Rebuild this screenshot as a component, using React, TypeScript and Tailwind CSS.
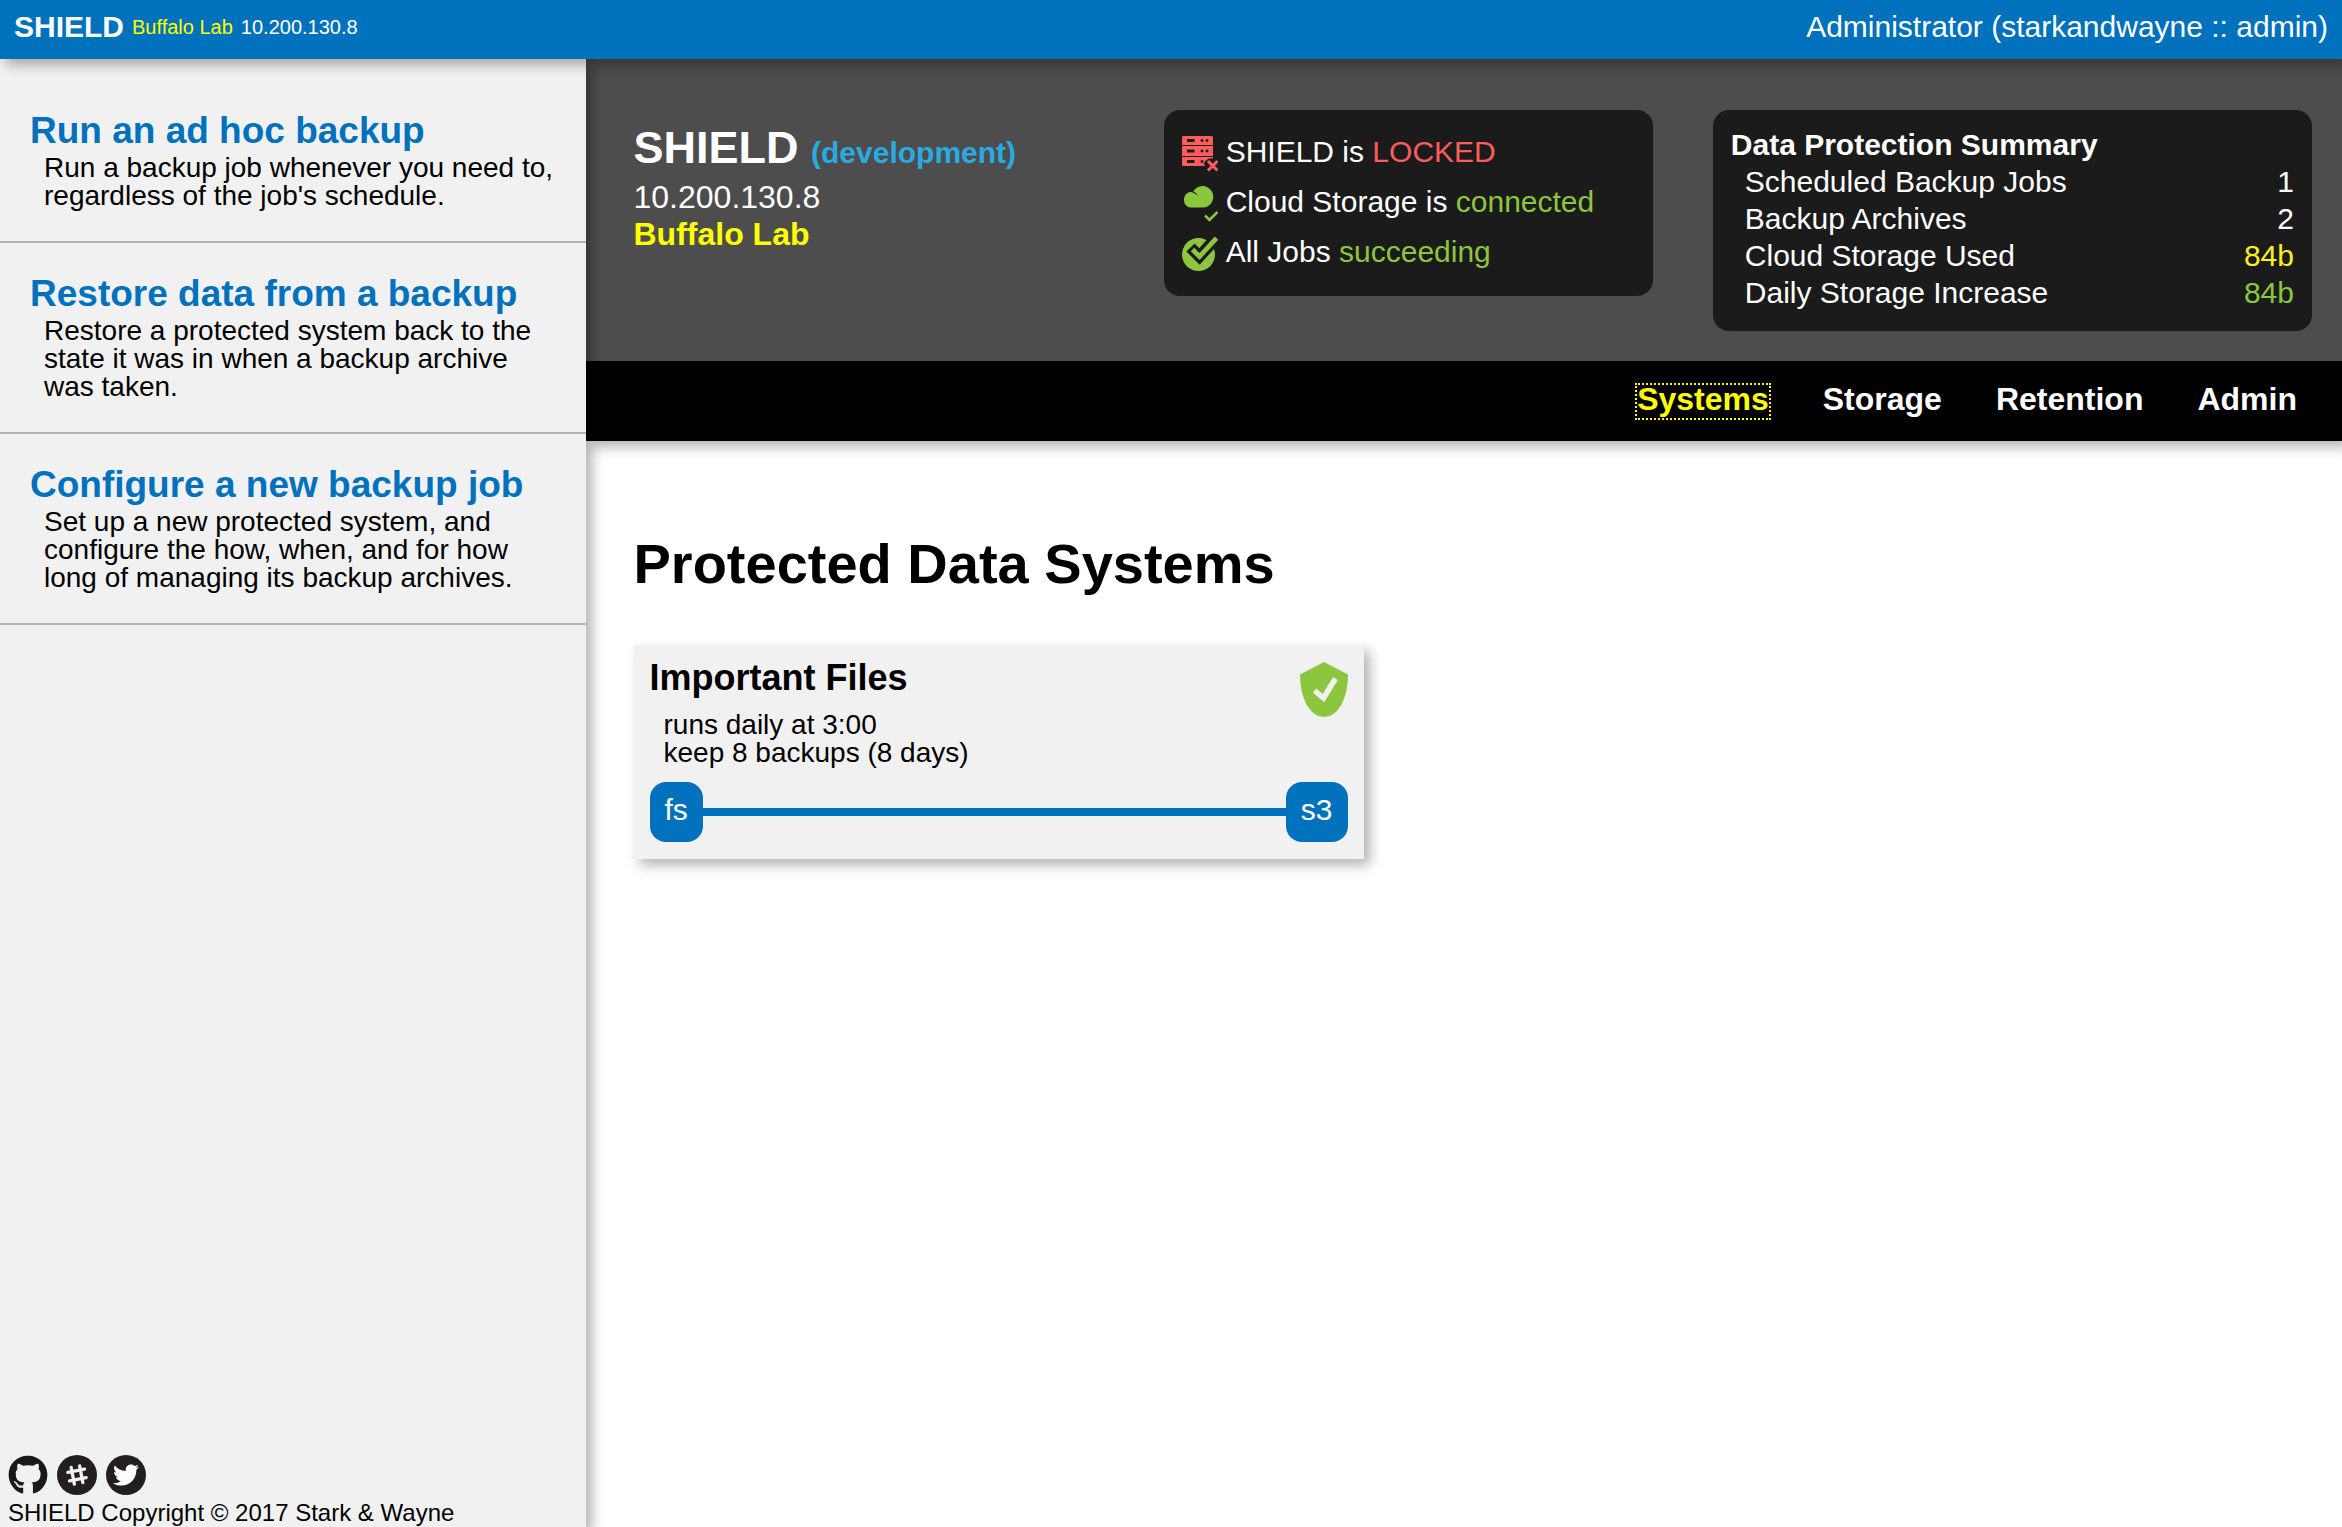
import React from "react";
import { FaGithub, FaTwitter } from "react-icons/fa";

const tasks = [
  {
    title: "Run an ad hoc backup",
    text: "Run a backup job whenever you need to, regardless of the job's schedule.",
  },
  {
    title: "Restore data from a backup",
    text: "Restore a protected system back to the state it was in when a backup archive was taken.",
  },
  {
    title: "Configure a new backup job",
    text: "Set up a new protected system, and configure the how, when, and for how long of managing its backup archives.",
  },
];

const summary = [
  { label: "Scheduled Backup Jobs", value: "1", color: "text-white" },
  { label: "Backup Archives", value: "2", color: "text-white" },
  { label: "Cloud Storage Used", value: "84b", color: "text-[#fcee21]" },
  { label: "Daily Storage Increase", value: "84b", color: "text-[#8cc63f]" },
];

const tabs = ["Systems", "Storage", "Retention", "Admin"];

function ServerLockedIcon() {
  return (
    <svg viewBox="0 0 36 36" className="size-9 shrink-0" fill="#ff5c5c" aria-hidden="true">
      <path
        fillRule="evenodd"
        d="M1.500 0H29.500a1.500 1.500 0 0 1 1.500 1.500V9H0V1.500A1.500 1.500 0 0 1 1.500 0ZM5 3V6H12.500V3ZM20 3a1.500 1.500 0 1 0 .01 0ZM25 3a1.500 1.500 0 1 0 .01 0Z"
      />
      <path
        fillRule="evenodd"
        d="M0 10H31V20H0ZM5 13.500V16.500H12.500V13.500ZM20 13.500a1.500 1.500 0 1 0 .01 0ZM25 13.500a1.500 1.500 0 1 0 .01 0Z"
      />
      <path
        fillRule="evenodd"
        d="M0 21H31V22.500Q27 21.500 24 24.500Q20.500 27 23 30H1.500A1.500 1.500 0 0 1 0 28.500ZM5 24V27H12.500V24ZM20 24a1.500 1.500 0 1 0 .01 0Z"
      />
      <path d="M26 25L35.500 34.500M35.500 25L26 34.500" stroke="#ff5c5c" strokeWidth="3" />
    </svg>
  );
}

function CloudConnectedIcon() {
  return (
    <svg viewBox="0 0 36 36" className="size-9 shrink-0" fill="#8cc63f" aria-hidden="true">
      <path d="M8 6A8 8 0 0 0 8 21.500H21A10.700 10.700 0 1 0 11.300 5.500Q14.500 6.500 15.700 9.800Q12 6 8 6Z" />
      <path d="M23 29.500L27.500 34L35.500 26" fill="none" stroke="#8cc63f" strokeWidth="2.500" />
    </svg>
  );
}

function JobsOkIcon() {
  return (
    <svg viewBox="0 0 36 36" className="size-9 shrink-0" aria-hidden="true">
      <circle cx="16.500" cy="18.500" r="16.500" fill="#8cc63f" />
      <path d="M8.500 11.500L17.500 20.500L36 0" fill="none" stroke="#1b1b1b" strokeWidth="11.500" />
      <path d="M10.500 13.500L17.500 20.500L34.500 2" fill="none" stroke="#8cc63f" strokeWidth="4.800" />
    </svg>
  );
}

function ShieldOkIcon() {
  return (
    <svg viewBox="0 0 48 55" className="h-[55px] w-12 shrink-0" role="img" aria-label="Protected">
      <path d="M24 0L48 12.500Q48 30 41.500 42.500Q34.500 55 24 55Q13.500 55 6.500 42.500Q0 30 0 12.500Z" fill="#8cc63f" />
      <path d="M14.500 28.500L23.500 36L35.500 16.500" fill="none" stroke="#f1f1f1" strokeWidth="5.500" />
    </svg>
  );
}

function SlackIcon() {
  return (
    <svg viewBox="0 0 40 40" className="size-10" aria-hidden="true">
      <circle cx="20" cy="20" r="20" fill="#231f20" />
      <g transform="rotate(-11 20 20)" fill="none" stroke="#f1f1f1" strokeWidth="3.300" strokeLinecap="round">
        <path d="M15.700 11.500V28.500M24.300 11.500V28.500M11.500 15.700H28.500M11.500 24.300H28.500" />
      </g>
    </svg>
  );
}

export default function App() {
  return (
    <div className="flex min-h-screen flex-col overflow-x-hidden bg-white font-['Liberation_Sans',Arial,sans-serif] text-black">
      <header className="relative z-20 flex items-center justify-between bg-[#0071bd] pt-[9px] pr-[14px] pb-[14px] pl-[14px] text-[30px] leading-9 text-white shadow-[6px_6px_12px_rgba(0,0,0,0.3)]">
        <div className="flex items-center gap-2">
          <span className="font-bold">SHIELD</span>
          <span className="text-xl text-[#ff0]">Buffalo Lab</span>
          <span className="text-xl">10.200.130.8</span>
        </div>
        <div>Administrator (starkandwayne :: admin)</div>
      </header>

      <div className="flex grow">
        <aside className="relative z-10 flex w-1/4 shrink-0 flex-col justify-between bg-[#f1f1f1] shadow-[6px_6px_12px_rgba(0,0,0,0.3)]">
          <nav className="pt-[21px]">
            {tasks.map((t) => (
              <a key={t.title} href="#" className="block border-b-2 border-[#b3b3b3] pt-[33px] pr-7 pb-[31px] pl-[30px]">
                <h2 className="mb-[5px] text-[37px] leading-9 font-bold text-[#0071bd]">{t.title}</h2>
                <p className="pl-[14px] text-[28px] leading-7">{t.text}</p>
              </a>
            ))}
          </nav>
          <footer className="px-2">
            <div className="mb-1 flex gap-[9px]">
              <a href="#" aria-label="GitHub">
                <FaGithub className="size-10 text-[#1b1817]" />
              </a>
              <a href="#" aria-label="Slack">
                <SlackIcon />
              </a>
              <a href="#" aria-label="Twitter" className="flex size-10 items-center justify-center rounded-full bg-[#231f20]">
                <FaTwitter className="size-[26px] text-white" />
              </a>
            </div>
            <p className="text-2xl leading-7">SHIELD Copyright © 2017 Stark &amp; Wayne</p>
          </footer>
        </aside>

        <div className="min-w-0 grow">
          <div className="shadow-[6px_6px_12px_rgba(0,0,0,0.3)]">
            <section className="grid grid-cols-[470fr_489fr_599fr] items-start gap-[60px] bg-[#4d4d4d] pt-[51px] pr-[30px] pb-[30px] pl-12 text-white">
              <div className="pt-3 text-[32px] leading-[37px]">
                <h1 className="text-[45px] leading-[52px] font-bold">
                  SHIELD <span className="text-[30px] text-[#29abe2]">(development)</span>
                </h1>
                <p>10.200.130.8</p>
                <p className="font-bold text-[#ff0]">Buffalo Lab</p>
              </div>

              <ul className="rounded-2xl bg-[#1b1b1b] p-[18px] text-[30px] leading-[48px]">
                <li className="flex items-start gap-2 pb-[2px]">
                  <span className="pt-2">
                    <ServerLockedIcon />
                  </span>
                  <span>
                    SHIELD is <span className="text-[#ff5c5c]">LOCKED</span>
                  </span>
                </li>
                <li className="flex items-start gap-2 pb-[2px]">
                  <span className="pt-2">
                    <CloudConnectedIcon />
                  </span>
                  <span>
                    Cloud Storage is <span className="text-[#8cc63f]">connected</span>
                  </span>
                </li>
                <li className="flex items-start gap-2 pb-[2px]">
                  <span className="pt-2">
                    <JobsOkIcon />
                  </span>
                  <span>
                    All Jobs <span className="text-[#8cc63f]">succeeding</span>
                  </span>
                </li>
              </ul>

              <div className="rounded-2xl bg-[#1b1b1b] px-[18px] pt-4 pb-5 text-[30px] leading-[37px]">
                <table className="w-full">
                  <caption className="text-left font-bold">Data Protection Summary</caption>
                  <tbody>
                    {summary.map((s) => (
                      <tr key={s.label}>
                        <th scope="row" className="p-0 pl-[14px] text-left font-normal">
                          {s.label}
                        </th>
                        <td className="p-0 text-right">
                          <span className={s.color}>{s.value}</span>
                        </td>
                      </tr>
                    ))}
                  </tbody>
                </table>
              </div>
            </section>

            <nav className="flex justify-end gap-[54px] bg-black pt-6 pr-[45px] pb-[23px] text-[32px] leading-7 font-bold text-white">
              {tabs.map((t, i) => (
                <a
                  key={t}
                  href="#"
                  aria-current={i === 0 ? "page" : undefined}
                  className={i === 0 ? "pb-[5px] text-[#ff0] outline-2 outline-[#ff0] outline-dotted" : "pb-[5px]"}
                >
                  {t}
                </a>
              ))}
            </nav>
          </div>

          <main className="px-12 pt-[91px]">
            <h2 className="mb-[49px] text-[56px] leading-[64px] font-bold">Protected Data Systems</h2>
            <article className="w-[730px] max-w-full bg-[#f1f1f1] px-4 pt-[13px] pb-[17px] shadow-[6px_6px_12px_rgba(0,0,0,0.3)]">
              <div className="flex items-start justify-between">
                <div>
                  <h3 className="mb-[13px] text-4xl leading-10 font-bold">Important Files</h3>
                  <p className="pl-[14px] text-[28px] leading-7">runs daily at 3:00</p>
                  <p className="pl-[14px] text-[28px] leading-7">keep 8 backups (8 days)</p>
                </div>
                <div className="pt-1">
                  <ShieldOkIcon />
                </div>
              </div>
              <div className="mt-[15px] flex items-center text-[30px] leading-[56px] text-white">
                <span className="rounded-2xl bg-[#0071bd] px-[15px] pb-1">fs</span>
                <span className="h-2 grow bg-[#0071bd]" />
                <span className="rounded-2xl bg-[#0071bd] px-[15px] pb-1">s3</span>
              </div>
            </article>
          </main>
        </div>
      </div>
    </div>
  );
}
